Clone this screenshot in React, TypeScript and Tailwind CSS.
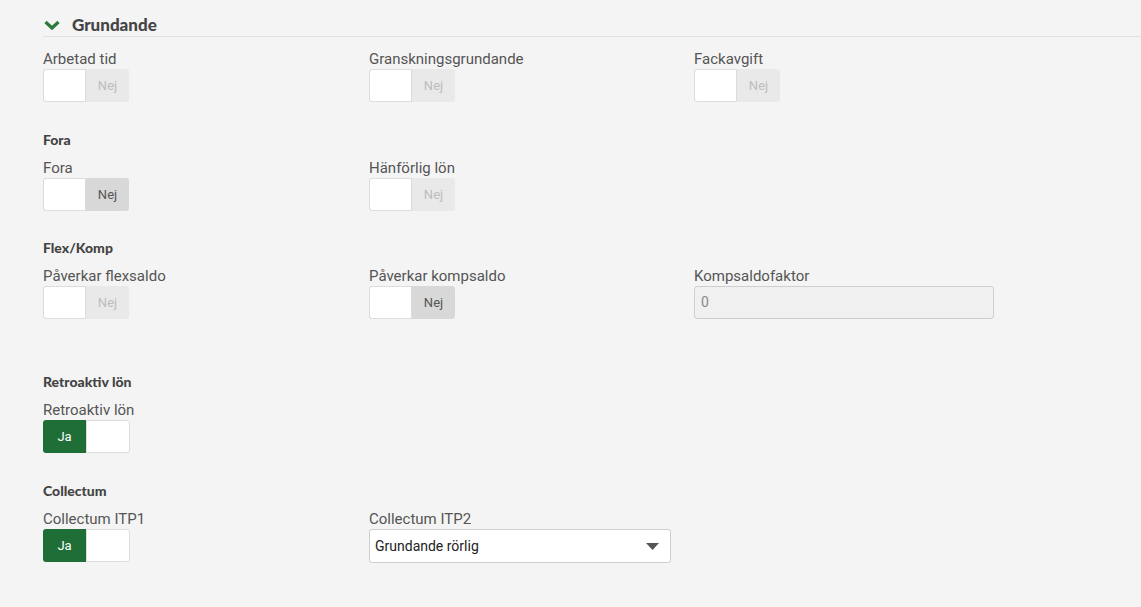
import React from "react";

type ToggleProps = {
  on?: boolean;
  disabled?: boolean;
};

const Toggle = ({ on = false, disabled = false }: ToggleProps) => {
  if (on) {
    return (
      <div className="flex h-[33px] w-[87px] rounded-[3px] overflow-hidden">
        <div className="flex w-[43px] items-center justify-center bg-[#1f6e38] text-[13px] text-white">
          Ja
        </div>
        <div className="w-[44px] rounded-r-[3px] border border-[#dcdcdc] bg-white" />
      </div>
    );
  }
  return (
    <div
      className={
        disabled
          ? "flex h-[33px] w-[86px] rounded-[3px] bg-[#e9e9e9]"
          : "flex h-[33px] w-[86px] rounded-[3px] bg-[#d8d8d8]"
      }
    >
      <div className="w-[43px] rounded-l-[3px] border border-[#dcdcdc] bg-white" />
      <div
        className={
          disabled
            ? "flex flex-1 items-center justify-center text-[13px] text-[#bdbdbd]"
            : "flex flex-1 items-center justify-center text-[13px] text-[#555]"
        }
      >
        Nej
      </div>
    </div>
  );
};

const Label = ({ children }: { children: React.ReactNode }) => (
  <div className="h-[20px] text-[15px] leading-[20px] text-[#555]">{children}</div>
);

const Heading = ({ children }: { children: React.ReactNode }) => (
  <div
    className="h-[20px] text-[14px] font-black leading-[20px] text-[#444]"
    style={{ fontFamily: "Lato, 'Noto Sans', sans-serif" }}
  >
    {children}
  </div>
);

const Row = ({ children }: { children: React.ReactNode }) => (
  <div className="grid grid-cols-[326px_325px_325px]">{children}</div>
);

export default function App() {
  return (
    <div
      className="min-h-[607px] w-full bg-[#f4f4f4] pl-[43px]"
      style={{ fontFamily: "Roboto, 'Liberation Sans', sans-serif" }}
    >
      <div className="flex h-[37px] items-end border-b border-[#e0e0e0] pb-[1px]">
        <div className="flex h-[20px] items-center gap-[12px] pl-[1px]">
          <svg width="16" height="12" viewBox="0 0 16 12">
            <path d="M1.5 3 L8 9 L14.5 3" fill="none" stroke="#2b7a3b" strokeWidth="3.2" />
          </svg>
          <span
            className="text-[17px] font-black text-[#444]"
            style={{ fontFamily: "Lato, 'Noto Sans', sans-serif" }}
          >
            Grundande
          </span>
        </div>
      </div>

      <div className="pt-[12px]">
        <Row>
          <div>
            <Label>Arbetad tid</Label>
            <Toggle disabled />
          </div>
          <div>
            <Label>Granskningsgrundande</Label>
            <Toggle disabled />
          </div>
          <div>
            <Label>Fackavgift</Label>
            <Toggle disabled />
          </div>
        </Row>

        <div className="mt-[28px]">
          <Heading>Fora</Heading>
          <div className="mt-[8px]">
            <Row>
              <div>
                <Label>Fora</Label>
                <Toggle />
              </div>
              <div>
                <Label>Hänförlig lön</Label>
                <Toggle disabled />
              </div>
            </Row>
          </div>
        </div>

        <div className="mt-[27px]">
          <Heading>Flex/Komp</Heading>
          <div className="mt-[8px]">
            <Row>
              <div>
                <Label>Påverkar flexsaldo</Label>
                <Toggle disabled />
              </div>
              <div>
                <Label>Påverkar kompsaldo</Label>
                <Toggle />
              </div>
              <div>
                <Label>Kompsaldofaktor</Label>
                <div className="flex h-[33px] w-[300px] items-center rounded-[3px] border border-[#cfcfcf] bg-[#f0f0f0] px-[6px] text-[14px] text-[#888]">
                  0
                </div>
              </div>
            </Row>
          </div>
        </div>

        <div className="mt-[53px]">
          <Heading>Retroaktiv lön</Heading>
          <div className="mt-[8px]">
            <Label>Retroaktiv lön</Label>
            <Toggle on />
          </div>
        </div>

        <div className="mt-[28px]">
          <Heading>Collectum</Heading>
          <div className="mt-[8px]">
            <Row>
              <div>
                <Label>Collectum ITP1</Label>
                <Toggle on />
              </div>
              <div>
                <Label>Collectum ITP2</Label>
                <div className="flex h-[34px] w-[302px] items-center justify-between rounded-[3px] border border-[#cfcfcf] bg-white pl-[5px] pr-[11px] text-[14px] text-[#222]">
                  <span>Grundande rörlig</span>
                  <svg width="13" height="7" viewBox="0 0 13 7">
                    <path d="M0 0 L13 0 L6.5 7 Z" fill="#555" />
                  </svg>
                </div>
              </div>
            </Row>
          </div>
        </div>
      </div>
    </div>
  );
}
